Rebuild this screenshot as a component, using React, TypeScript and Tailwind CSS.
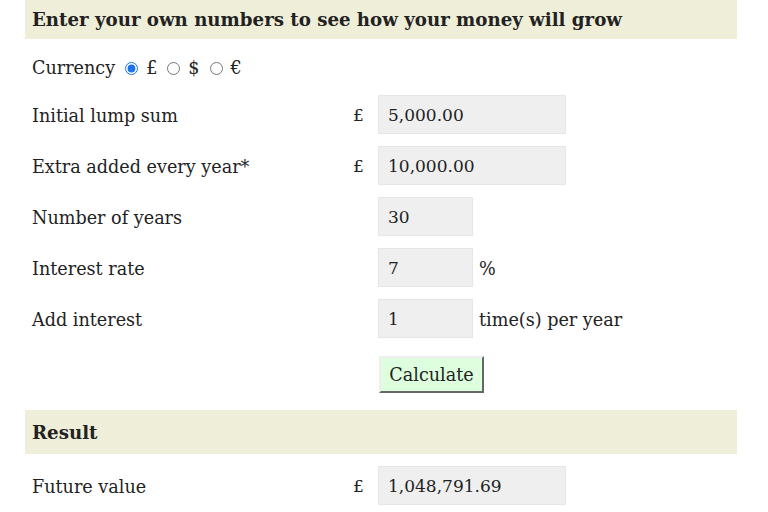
import React from "react";

const font = { fontFamily: '"DejaVu Serif", Georgia, serif' };

function Box({ value, wide }: { value: string; wide?: boolean }) {
  return (
    <div
      className={`h-[39px] ${wide ? "w-[188px]" : "w-[95px]"} bg-[#efefef] border border-[#e6e6e6] flex items-center pl-[9px] pt-[3px] text-[#222] text-[17px]`}
    >
      {value}
    </div>
  );
}

function Row({ label, sym, value, wide, suffix }: { label: string; sym?: string; value: string; wide?: boolean; suffix?: string }) {
  return (
    <div className="flex items-center h-[39px]">
      <div className="w-[328px] pl-[7px] pt-[3px] text-[17.6px] text-[#222]">{label}</div>
      <div className="w-[25px] pt-[2px] text-[17px] text-[#222]">{sym ?? ""}</div>
      <Box value={value} wide={wide} />
      {suffix && <div className="ml-[6px] text-[17.6px] text-[#222] self-start pt-[8px]">{suffix}</div>}
    </div>
  );
}

export default function App() {
  return (
    <div className="bg-white w-[768px] h-[512px] overflow-hidden" style={font}>
      <div className="ml-[25px] w-[712px]">
        <div className="h-[39px] bg-[#efeed8] flex items-center pl-[7px] font-bold text-[18.2px] text-[#222]">
          Enter your own numbers to see how your money will grow
        </div>
        <div className="mt-[9px] h-[39px] flex items-center pl-[7px] pt-[2px] text-[17.6px] text-[#222]">
          <span>Currency</span>
          <input type="radio" name="cur" defaultChecked className="w-[13px] h-[13px] m-0 ml-[10px] accent-[#1a73e8]" />
          <span className="ml-[8px]">£</span>
          <input type="radio" name="cur" className="w-[13px] h-[13px] m-0 ml-[10px]" />
          <span className="ml-[8px]">$</span>
          <input type="radio" name="cur" className="w-[13px] h-[13px] m-0 ml-[10px]" />
          <span className="ml-[8px]">€</span>
        </div>
        <div className="mt-[8px] flex flex-col gap-[12px]">
          <Row label="Initial lump sum" sym="£" value="5,000.00" wide />
          <Row label="Extra added every year*" sym="£" value="10,000.00" wide />
          <Row label="Number of years" value="30" />
          <Row label="Interest rate" value="7" suffix="%" />
          <Row label="Add interest" value="1" suffix="time(s) per year" />
        </div>
        <div className="mt-[18px] pl-[354px]">
          <button className="h-[37px] w-[105px] pt-[2px] bg-[#ddffdd] border-2 border-t-[#eeeeee] border-l-[#eeeeee] border-b-[#666] border-r-[#666] text-[17.6px] text-[#222]">
            Calculate
          </button>
        </div>
        <div className="mt-[17px] h-[44px] bg-[#efeed8] flex items-center pl-[7px] pt-[2px] font-bold text-[18.2px] text-[#222]">
          Result
        </div>
        <div className="mt-[12px]">
          <Row label="Future value" sym="£" value="1,048,791.69" wide />
        </div>
      </div>
    </div>
  );
}
